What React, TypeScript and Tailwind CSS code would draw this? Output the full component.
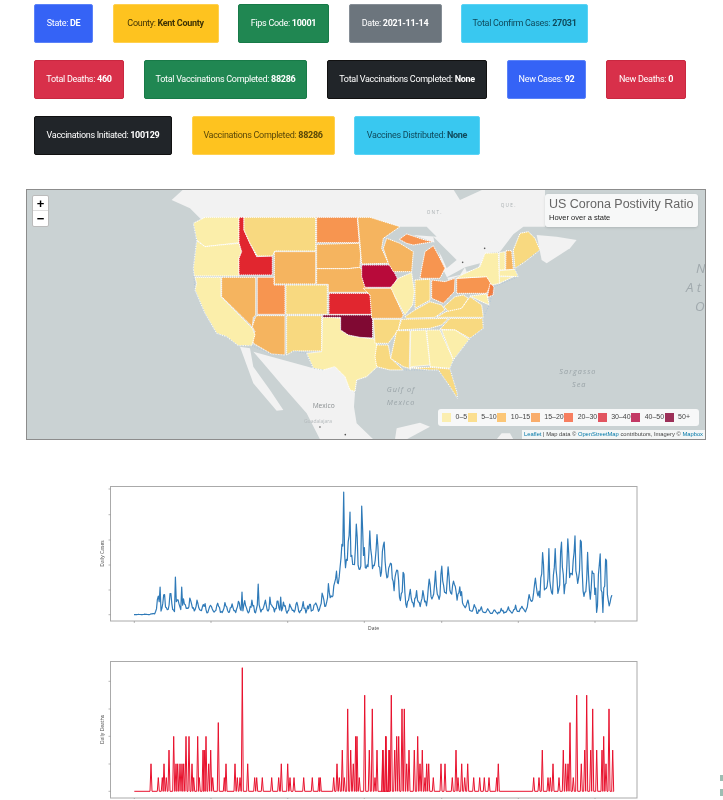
const sans = "font-['Roboto','Noto_Sans',sans-serif]";

type Badge = { label: string; value: string; cls: string; w: string };

const rows: Badge[][] = [
  [
    { label: "State:", value: "DE", cls: "bg-[#3563f6] border-[#5b82f8] text-white", w: "w-[59px]" },
    { label: "County:", value: "Kent County", cls: "bg-[#fec31f] border-[#ffd04f] text-[#3f3305]", w: "w-[106px]" },
    { label: "Fips Code:", value: "10001", cls: "bg-[#208752] border-[#187a48] text-white", w: "w-[91px]" },
    { label: "Date:", value: "2021-11-14", cls: "bg-[#6c757d] border-[#868e96] text-white", w: "w-[93px]" },
    { label: "Total Confirm Cases:", value: "27031", cls: "bg-[#39c8f0] border-[#5ad3f5] text-[#0f4a5c]", w: "w-[127px]" },
  ],
  [
    { label: "Total Deaths:", value: "460", cls: "bg-[#d8304a] border-[#c92840] text-white", w: "w-[90px]" },
    { label: "Total Vaccinations Completed:", value: "88286", cls: "bg-[#208752] border-[#187a48] text-white", w: "w-[163px]" },
    { label: "Total Vaccinations Completed:", value: "None", cls: "bg-[#212529] border-[#111] text-white", w: "w-[160px]" },
    { label: "New Cases:", value: "92", cls: "bg-[#3563f6] border-[#5b82f8] text-white", w: "w-[79px]" },
    { label: "New Deaths:", value: "0", cls: "bg-[#d8304a] border-[#c92840] text-white", w: "w-[80px]" },
  ],
  [
    { label: "Vaccinations Initiated:", value: "100129", cls: "bg-[#212529] border-[#111] text-white", w: "w-[138px]" },
    { label: "Vaccinations Completed:", value: "88286", cls: "bg-[#fec31f] border-[#ffd04f] text-[#5a4808]", w: "w-[143px]" },
    { label: "Vaccines Distributed:", value: "None", cls: "bg-[#39c8f0] border-[#5ad3f5] text-[#0f4a5c]", w: "w-[126px]" },
  ],
];

const C = {
  a: "#fbeeaa",
  b: "#f8d980",
  c: "#f5b45f",
  d: "#f79550",
  e: "#e1262f",
  f: "#b80a3a",
  g: "#800933",
};

// state shapes, coordinates are 3x crops of the map (west and east halves)
const west: [string, string][] = [
  ["520,130 555,112 657,112 657,188 600,195 555,200 530,180", C.a],
  ["530,182 555,200 600,195 657,190 665,215 657,235 657,288 523,288 520,265", C.a],
  ["657,112 672,112 672,150 690,190 710,230 757,228 757,285 657,285 657,235 665,215 657,188", C.e],
  ["672,112 887,112 887,213 765,213 757,228 712,228 690,190 672,150", C.b],
  ["763,215 887,215 887,312 763,312", C.c],
  ["890,112 1012,112 1018,188 890,188", C.d],
  ["890,193 1018,190 1022,225 1020,262 985,266 890,266", C.c],
  ["890,266 985,266 1020,262 1040,290 1047,337 925,337 925,313 890,313", C.c],
  ["798,315 922,315 922,403 798,403", C.b],
  ["927,340 1045,340 1056,352 1056,403 927,403", C.e],
  ["908,410 962,415 962,450 985,465 1020,472 1070,478 1072,560 1040,590 1010,600 1005,635 990,630 975,590 945,560 910,570 880,565 860,520 905,515", C.a],
  ["908,405 1058,405 1058,474 1020,472 985,465 962,450 962,412 908,412", C.g],
  ["605,292 707,292 707,405 700,412 697,440 605,350", C.c],
  ["712,292 762,292 762,315 795,315 795,403 712,403", C.d],
  ["710,407 795,407 795,525 755,522 700,490 697,470 705,455 697,440 705,415", C.c],
  ["800,407 905,407 905,513 820,513 800,525", C.b],
  ["525,292 603,292 603,350 697,445 705,465 695,497 655,497 620,470 590,460 555,400 525,330 530,310", C.a],
];

const east: [string, string][] = [
  ["-37,112 0,112 90,140 40,175 35,205 55,250 -25,252 -30,190", C.c],
  ["-25,255 62,255 82,295 68,322 -15,322 -25,290", C.f],
  ["-20,325 68,325 75,350 100,405 95,415 5,415 0,345", C.c],
  ["10,418 92,418 85,450 55,490 15,490", C.b],
  ["20,495 55,495 62,535 100,570 60,570 20,560 15,530", C.b],
  ["40,205 50,175 90,190 130,215 125,275 70,275 55,250", C.c],
  ["88,178 110,162 165,180 190,185 130,195 110,190", C.d],
  ["155,265 165,215 190,197 210,235 225,265 210,295 150,295", C.d],
  ["85,295 125,278 133,335 128,375 105,405 75,350 62,322", C.a],
  ["135,300 180,298 180,360 135,385", C.b],
  ["185,300 225,305 255,295 253,335 220,370 185,355", C.d],
  ["105,410 135,390 180,365 215,375 225,390 195,412 110,415", C.b],
  ["95,418 235,415 215,435 180,445 85,450", C.b],
  ["222,380 255,350 280,345 295,355 275,385 240,400", C.b],
  ["228,395 275,385 300,350 335,375 340,412 200,412", C.b],
  ["240,415 338,415 340,445 300,475 255,450 210,448", C.b],
  ["215,450 255,450 298,478 250,540", C.a],
  ["170,450 210,450 250,540 240,565 180,560", C.a],
  ["122,452 168,450 180,555 125,560 120,570", C.a],
  ["80,452 120,452 118,565 100,560 62,535", C.b],
  ["120,563 180,562 240,567 262,640 262,655 240,620 205,570 175,570", C.b],
  ["260,295 350,290 365,310 350,340 260,340", C.d],
  ["275,285 330,260 345,220 385,218 388,290 390,310 365,315 350,290 260,295", C.a],
  ["360,310 372,320 370,345 352,352", "#f37b3e"],
  ["300,348 350,342 358,375 335,365", C.a],
  ["388,218 405,215 405,270 388,270", C.a],
  ["408,212 425,212 430,268 407,270", C.c],
  ["430,210 450,160 475,155 495,175 510,210 465,245 435,265", C.b],
  ["388,272 435,268 445,290 388,288", C.a],
  ["388,290 430,290 388,310", C.a],
];

const legend = [
  ["#fbeeb0", "0–5"],
  ["#fbdf90", "5–10"],
  ["#fcc777", "10–15"],
  ["#f9ad6b", "15–20"],
  ["#f77f60", "20–30"],
  ["#e25560", "30–40"],
  ["#c33a65", "40–50"],
  ["#9c3058", "50+"],
];

const USMap = () => (
  <svg viewBox="0 0 678 249" className="block w-full h-full">
    <rect width="678" height="249" fill="#cad2d3" />
    <g transform="translate(-7 -10) scale(0.3333)">
      {/* canada */}
      <polygon points="455,60 490,28 1060,28 1060,112 555,112 555,130 510,85" fill="#f2f2f2" />
      {/* mexico and baja */}
      <polygon points="700,515 880,565 960,560 1005,640 1002,680 1010,730 1060,778 900,778 860,700 790,620 730,550" fill="#f2f2f2" />
      <polygon points="660,500 690,505 700,560 750,630 790,690 770,692 700,610" fill="#f2f2f2" />
      <text x="878" y="685" fontSize="20" fill="#8a8f91" fontFamily="Open Sans, sans-serif">Mexico</text>
      <text x="852" y="730" fontSize="15" fill="#b4babc" fontFamily="Open Sans, sans-serif">Guadalajara</text>
      <circle cx="900" cy="741" r="2.5" fill="#555" />
      <circle cx="976" cy="764" r="2.5" fill="#555" />
      {west.map(([p, c]) => (
        <polygon key={p} points={p} fill={c} stroke="#fff" strokeWidth="3" strokeDasharray="4 2" />
      ))}
      <polyline points="520,130 530,180 520,265 525,330 555,400 590,460 620,470 655,497 695,497 755,522 795,525 820,513 860,520 880,565 910,570" fill="none" stroke="#9dbbdc" strokeWidth="2" strokeDasharray="3 5" />
    </g>
    <g transform="translate(343 -10) scale(0.3333)">
      {/* canada east */}
      <polygon points="-10,28 250,28 270,60 340,28 525,28 525,140 460,140 420,170 440,150 390,215 345,220 330,260 275,285 235,300 220,270 200,190 130,165 90,140 0,112 -10,112" fill="#f2f2f2" />
      <polygon points="500,165 560,170 620,180 600,205 530,250 515,240" fill="#f2f2f2" />
      <polygon points="80,745 150,728 180,740 110,778 75,778" fill="#f2f2f2" />
      <polygon points="380,778 395,760 420,760 430,778" fill="#f2f2f2" />
      {/* great lakes */}
      <polygon points="45,175 90,140 170,140 200,170 130,165 95,165" fill="#cad2d3" />
      <polygon points="130,205 175,190 155,265 140,290 130,260" fill="#cad2d3" />
      <polygon points="190,170 260,240 230,265 215,230 195,195" fill="#cad2d3" />
      <polygon points="225,295 285,262 270,285" fill="#cad2d3" />
      <polygon points="285,262 330,250 325,265 290,275" fill="#cad2d3" />
      {east.map(([p, c]) => (
        <polygon key={p} points={p} fill={c} stroke="#fff" strokeWidth="3" strokeDasharray="4 2" />
      ))}
      <polyline points="100,570 120,570 175,570 205,570 240,620 262,655 262,640 240,567 250,540 298,478 340,445 338,415 358,375 372,320 445,290 435,265 510,210" fill="none" stroke="#9dbbdc" strokeWidth="2" strokeDasharray="3 5" />
      <g fontFamily="Open Sans, sans-serif" fontStyle="italic" fill="#9aa4a8" fontSize="22" letterSpacing="3">
        <text x="50" y="636">Gulf of</text>
        <text x="50" y="674">Mexico</text>
        <text x="568" y="582">Sargasso</text>
        <text x="606" y="620">Sea</text>
      </g>
      <g fontFamily="Open Sans, sans-serif" fontStyle="italic" fill="#a0a9ad" fontSize="40" letterSpacing="10">
        <text x="978" y="278">N</text>
        <text x="948" y="336">At</text>
        <text x="975" y="394">O</text>
      </g>
      <text x="170" y="102" fontSize="14" letterSpacing="4" fill="#aab0b2" fontFamily="Open Sans, sans-serif">ONT.</text>
      <text x="392" y="80" fontSize="14" letterSpacing="4" fill="#aab0b2" fontFamily="Open Sans, sans-serif">QUE.</text>
      <circle cx="344" cy="205" r="2.5" fill="#555" />
      <circle cx="278" cy="247" r="2.5" fill="#555" />
    </g>
  </svg>
);

const blueEnv: [number, number, number][] = [
  [134, 615.5, 615.7], [150, 615, 615.7], [155, 612, 615], [158, 596, 612], [165, 594, 614], [175, 592, 614],
  [190, 598, 612], [200, 601, 613], [210, 604, 615], [230, 602, 615], [250, 600, 615], [270, 600, 613],
  [290, 603, 615], [310, 601, 615], [320, 596, 613], [330, 580, 608], [337, 568, 592], [342, 535, 572],
  [350, 515, 578], [362, 525, 580], [375, 530, 575], [383, 538, 580], [395, 555, 594], [403, 570, 610],
  [413, 590, 610], [423, 590, 610], [432, 572, 608], [442, 564, 602], [458, 566, 604], [462, 594, 611],
  [472, 604, 615], [493, 611, 615], [513, 606, 615], [527, 603, 613], [533, 578, 604], [543, 548, 604],
  [560, 539, 602], [577, 530, 592], [587, 548, 615], [603, 550, 615], [610, 564, 615], [613, 596, 600],
];

const blueSpikes: [number, number][] = [
  [160, 588], [175, 578], [182, 588], [242, 593], [258, 585], [270, 598], [281, 598], [344, 493], [361.5, 507], [350, 513],
];

const lerpEnv = (x: number) => {
  for (let i = 1; i < blueEnv.length; i++) {
    if (x <= blueEnv[i][0]) {
      const [x0, u0, l0] = blueEnv[i - 1];
      const [x1, u1, l1] = blueEnv[i];
      const t = (x - x0) / (x1 - x0);
      return [u0 + (u1 - u0) * t, l0 + (l1 - l0) * t];
    }
  }
  return [600, 600];
};

const rnd = (n: number) => {
  const v = Math.sin(n * 127.1 + 11.7) * 43758.5453;
  return v - Math.floor(v);
};

const bluePoints = () => {
  const pts: string[] = [];
  let i = 0;
  for (let x = 134; x <= 612.7; x += 0.9) {
    const [u, l] = lerpEnv(x);
    const wave = 0.5 + 0.5 * Math.cos((2 * Math.PI * x) / 6.6 + Math.sin(x / 23));
    const shape = wave * 0.65 + rnd(i) * 0.35;
    let y = l + (u - l) * shape * (0.6 + 0.4 * rnd(i * 3 + 1));
    if (wave > 0.9 && rnd(i + 50) > 0.5) y = u + (l - u) * 0.08;
    const spike = blueSpikes.find((s) => Math.abs(s[0] - x) < 0.46);
    if (spike) y = spike[1];
    pts.push(`${x.toFixed(2)},${y.toFixed(1)}`);
    i++;
  }
  return pts.join(" ");
};

const redLeft: [number, number][] = [
  [183, 2], [205, 1], [217, 1], [222, 2], [229, 1], [237, 3], [251, 4], [258, 2], [263, 2], [270, 2], [276, 2], [281, 2],
  [288, 4], [297, 4], [306, 2], [311, 1], [323, 4], [328, 1], [339, 3], [343, 3], [348, 4], [356, 2], [362, 3], [368, 1],
  [385, 5], [403, 1], [408, 2], [435, 2], [442, 1], [450, 1], [457, 9], [473, 2], [494, 1], [500, 1], [517, 1], [545, 1],
  [566, 1], [574, 2], [593, 2], [600, 1], [612, 1], [641, 1], [667, 1], [687, 1], [691, 1], [731, 1], [741, 2], [748, 1],
  [757, 3], [763, 1], [773, 6], [782, 3], [790, 2], [797, 4], [801, 4], [808, 1], [824, 7], [838, 3], [847, 6], [855, 1],
  [861, 3], [879, 3], [887, 4], [897, 3],
];

const redRight: [number, number][] = [
  [8, 3], [18, 4], [28, 3], [34, 7], [44, 3], [50, 4], [56, 4], [66, 6], [73, 6], [80, 2], [87, 3], [103, 3], [113, 4],
  [120, 2], [127, 3], [135, 1], [140, 2], [146, 2], [160, 1], [183, 2], [195, 2], [217, 1], [228, 3], [234, 1], [245, 2],
  [254, 1], [263, 2], [281, 1], [299, 1], [313, 1], [327, 1], [350, 1], [355, 2], [461, 1], [477, 1], [487, 3], [504, 1],
  [511, 1], [519, 2], [537, 1], [550, 3], [557, 2], [564, 2], [570, 5], [580, 1], [590, 7], [604, 2], [614, 3], [620, 7],
  [632, 3], [638, 6], [650, 3], [666, 3], [671, 4], [678, 2], [687, 6], [698, 3],
];

const redPoints = () => {
  const base = 792.3;
  const spikes = [
    ...redLeft.map(([z, n]) => [90 + z / 3, n]),
    ...redRight.map(([z, n]) => [380 + z / 3, n]),
  ];
  const pts = [`134.3,${base}`];
  spikes.forEach(([x, n]) => {
    pts.push(`${(x - 1).toFixed(1)},${base}`);
    pts.push(`${x.toFixed(1)},${(base - n * 13.73).toFixed(1)}`);
    pts.push(`${(x + 1).toFixed(1)},${base}`);
  });
  pts.push(`612.7,${base}`);
  return pts.join(" ");
};

const bottomTicks = [134.3, 211, 287.7, 364.3, 441.7, 518.3, 595];

const Chart = ({ top, height, frameBottom, label, yTicks, points, color, width, date }: {
  top: number;
  height: number;
  frameBottom: number;
  label: string;
  yTicks: number[];
  points: string;
  color: string;
  width: number;
  date?: boolean;
}) => (
  <svg viewBox={`96 ${top} 544 ${height}`} className="block w-[544px] ml-[96px]" style={{ height }}>
    <rect x="110.5" y={top + 0.5} width="526.5" height={frameBottom - top - 0.5} fill="#fff" stroke="#aaa" strokeWidth="1" />
    {yTicks.map((y) => (
      <line key={y} x1="108.5" x2="110.5" y1={y} y2={y} stroke="#888" strokeWidth="0.6" />
    ))}
    {bottomTicks.map((x) => (
      <line key={x} x1={x} x2={x} y1={frameBottom} y2={frameBottom + 2} stroke="#888" strokeWidth="0.6" />
    ))}
    <polyline points={points} fill="none" stroke={color} strokeWidth={width} strokeLinejoin="round" />
    <text
      x="104"
      y={(top + frameBottom) / 2}
      transform={`rotate(-90 104 ${(top + frameBottom) / 2})`}
      textAnchor="middle"
      fontSize="5"
      fill="#444"
      fontFamily="Open Sans, sans-serif"
    >
      {label}
    </text>
    {date && (
      <text x="373.5" y={frameBottom + 9} textAnchor="middle" fontSize="5" fill="#444" fontFamily="Open Sans, sans-serif">
        Date
      </text>
    )}
  </svg>
);

export default function App() {
  return (
    <div className={`h-[800px] overflow-hidden bg-white pt-[4px] relative blur-[0.5px] ${sans}`}>
      <div className="flex flex-col gap-[17px] pl-[34px]">
        {rows.map((row, i) => (
          <div key={i} className={`flex ${i === 1 ? "gap-[20px]" : "gap-[19.5px]"}`}>
            {row.map((b, j) => (
              <div
                key={j}
                className={`${b.cls} ${b.w} h-[39px] flex items-center justify-center border rounded-[2px] text-[9px] tracking-[-0.3px] whitespace-nowrap`}
              >
                {b.label}&nbsp;<b>{b.value}</b>
              </div>
            ))}
          </div>
        ))}
      </div>

      <div className="relative ml-[26px] mt-[34px] w-[680px] h-[251px] border border-[#8c8c8c] overflow-hidden font-['Liberation_Sans',sans-serif]">
        <USMap />
        <div className="absolute left-[5px] top-[5px] w-[17px] bg-white rounded-[2px] border border-[#bbb] flex flex-col text-black font-bold leading-none">
          <div className="h-[15px] flex items-center justify-center text-[13px] border-b border-[#ddd]">+</div>
          <div className="h-[15px] flex items-center justify-center text-[13px]">−</div>
        </div>
        <div className="absolute left-[518px] top-[4px] w-[153px] h-[33px] bg-white/85 rounded-[3px] px-[4px] pt-[2px] shadow-sm">
          <div className="text-[12.5px] leading-[16px] text-[#666] whitespace-nowrap">US Corona Postivity Ratio</div>
          <div className="text-[7.5px] leading-[12px] text-[#222]">Hover over a state</div>
        </div>
        <div className="absolute left-[411px] top-[219px] w-[261px] h-[17px] bg-white/85 rounded-[3px] flex items-center pl-[4px] text-[7px] text-[#444] whitespace-nowrap">
          {legend.map(([c, t]) => (
            <div key={t} className="flex items-center">
              <svg width="9" height="9" className="mr-[4.5px]">
                <rect width="9" height="9" fill={c} />
              </svg>
              <span className="mr-[0.5px]">{t}</span>
            </div>
          ))}
        </div>
        <div className="absolute right-0 bottom-0 h-[9px] bg-white/80 px-[2px] text-[5.8px] leading-[9px] text-[#444] whitespace-nowrap">
          <span className="text-[#0078a8]">Leaflet</span> | Map data © <span className="text-[#0078a8]">OpenStreetMap</span> contributors, Imagery © <span className="text-[#0078a8]">Mapbox</span>
        </div>
      </div>

      <div className="mt-[46px]">
        <Chart
          top={487}
          height={146}
          frameBottom={622}
          label="Daily Cases"
          yTicks={[490, 515.7, 541, 566, 591, 615.7]}
          points={bluePoints()}
          color="#2f7ab8"
          width={1.2}
          date
        />
      </div>
      <div className="mt-[29px]">
        <Chart
          top={662}
          height={138}
          frameBottom={799}
          label="Daily Deaths"
          yTicks={[682.3, 710, 737.3, 765, 792.3]}
          points={redPoints()}
          color="#e8112d"
          width={1}
        />
      </div>

      {/* clipped marks at the right edge */}
      <div className="absolute right-0 top-[775px] w-[3px] h-[6px] bg-[#9dbdb2]" />
      <div className="absolute right-0 top-[789px] w-[3px] h-[7px] bg-[#9dbdb2]" />
    </div>
  );
}
